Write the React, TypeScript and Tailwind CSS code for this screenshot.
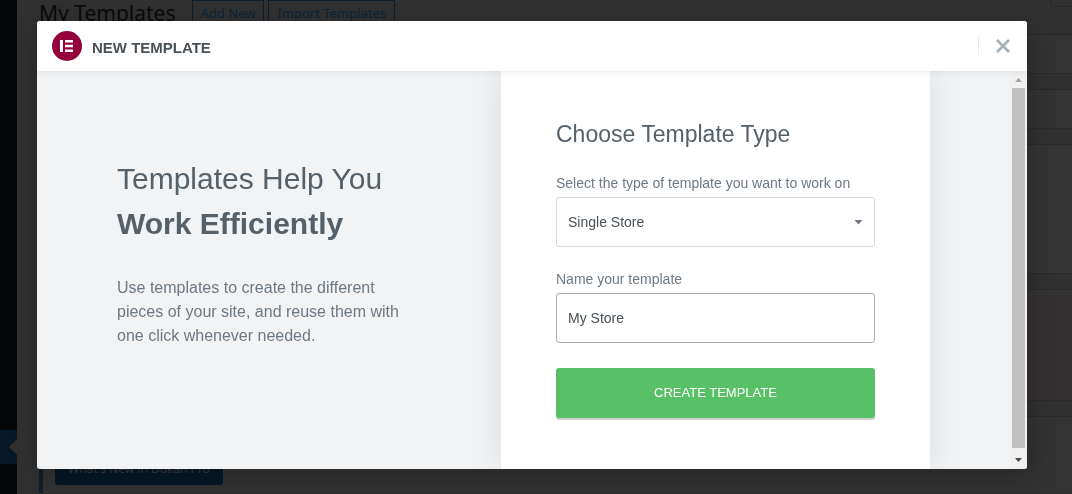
import React, { useState } from 'react';
import clsx from 'clsx';

const noticeCards = [
  { id: 'screen', className: 'h-10 bg-[#333333] border-[#292929]' },
  { id: 'update', className: 'h-10 bg-[#333333] border-[#292929]' },
  { id: 'license', className: 'h-[130px] bg-[#343434] border-[#292929]' },
  { id: 'promo', className: 'h-28 bg-[#343132] border-[#292929]' },
];

const AdminPage: React.FC = () => (
  <div className="flex h-screen overflow-hidden bg-[#303030] font-['Noto_Sans','Open_Sans',sans-serif]">
    {/* Collapsed admin menu */}
    <aside className="w-[17px] shrink-0 bg-[#050608] pt-[430px]">
      <div className="flex h-[34px] items-center justify-end bg-[#061726]">
        <svg width="8" height="16" viewBox="0 0 8 16" fill="#303030">
          <path d="M8 0v16L0 8z" />
        </svg>
      </div>
    </aside>

    <main className="min-w-0 flex-1 pl-[22px]">
      <div className="flex h-[34px] items-start">
        <h1 className="text-[21px] leading-[26px] text-[#0b0b0b]">My Templates</h1>
        <button type="button" className="ml-4 h-[26px] border border-[#0a1e2f] px-2 text-[13px] leading-6 text-[#0a2338]">
          Add New
        </button>
        <button type="button" className="ml-1 h-[26px] border border-[#0a1e2f] px-2 text-[13px] leading-6 text-[#0a2338]">
          Import Templates
        </button>
        <div className="ml-auto h-[7px] w-[22px] rounded-bl border-b border-l border-[#262626]"></div>
      </div>

      <div className="flex flex-col gap-[15px]">
        {noticeCards.map((card) => (
          <div key={card.id} className={clsx('shrink-0 border-y', card.className)}></div>
        ))}
        <div className="h-[77px] shrink-0 border-l-4 border-t border-l-[#0f1e2c] border-t-[#292929] bg-[#333333] pl-3 pt-9">
          <button type="button" className="h-8 rounded-[3px] bg-[#061726] px-[13px] text-xs leading-8 text-[#3b3b3b]">
            What's New in Dokan Pro
          </button>
        </div>
      </div>
    </main>
  </div>
);

const Logo: React.FC = () => (
  <svg width="30" height="30" viewBox="0 0 30 30">
    <circle cx="15" cy="15" r="15" fill="#93003c" />
    <path d="M8 9h3v12H8zM13 9h8v2.4h-8zM13 13.8h8v2.400h-8zM13 18.600h8V21h-8z" fill="#fff" />
  </svg>
);

const ScrollTrack: React.FC = () => (
  <div className="flex w-[17px] shrink-0 flex-col items-center bg-[#f1f1f1]" aria-hidden="true">
    <svg width="17" height="17" viewBox="0 0 17 17" fill="#a3a3a3">
      <path d="M5 11h7L8.500 7z" />
    </svg>
    <div className="w-[13px] flex-1 bg-[#c1c1c1]"></div>
    <svg className="mt-1" width="17" height="17" viewBox="0 0 17 17" fill="#505050">
      <path d="M5 6h7L8.500 10z" />
    </svg>
  </div>
);

const App: React.FC = () => {
  const [type, setType] = useState('single-store');
  const [name, setName] = useState('My Store');

  return (
    <>
      <AdminPage />

      <div className="fixed inset-0 overflow-hidden pl-[37px] pr-[45px] pt-[21px] font-['Liberation_Sans',Arial,sans-serif]">
        <div role="dialog" aria-labelledby="dialog-title" className="overflow-hidden rounded-[3px] bg-[#f1f3f5] shadow-[2px_8px_23px_3px_rgba(0,0,0,0.2)]">
          {/* Header */}
          <header className="relative flex h-[50px] items-center bg-white pl-[15px] pr-4 shadow-[0_0_8px_rgba(0,0,0,0.1)]">
            <Logo />
            <h2 id="dialog-title" className="ml-2.5 pt-1 text-[15px] font-bold leading-5 text-[#495157]">
              NEW TEMPLATE
            </h2>
            <button type="button" aria-label="Close" className="ml-auto flex h-[18px] items-center border-l border-[#e6e9ec] pl-4">
              <svg width="16" height="16" viewBox="0 0 16 16" fill="none" stroke="#a4afb7" strokeWidth="2.600">
                <path d="M2 2l12 12M14 2L2 14" />
              </svg>
            </button>
          </header>

          {/* Body */}
          <div className="flex">
            <section className="min-w-0 flex-1 pl-20 pt-[85px]">
              <h3 className="text-[30px] leading-[45px] text-[#556068]">
                Templates Help You
                <strong className="block">Work Efficiently</strong>
              </h3>
              <p className="mt-[30px] max-w-[290px] text-base text-[#6d7882]">
                Use templates to create the different pieces of your site, and reuse them with one click whenever needed.
              </p>
            </section>

            <form
              onSubmit={(e) => e.preventDefault()}
              className="mr-20 w-[429px] shrink-0 bg-white px-[55px] pb-[51px] pt-[47px] text-sm text-[#495157] shadow-[0_0_30px_rgba(0,0,0,0.1)]"
            >
              <h3 className="text-[23px] leading-8 text-[#556068]">Choose Template Type</h3>

              <label htmlFor="template-type" className="mt-[23px] block pb-1 text-[#6d7882]">
                Select the type of template you want to work on
              </label>
              <div className="relative">
                <select
                  id="template-type"
                  value={type}
                  onChange={(e) => setType(e.target.value)}
                  className="block h-[50px] w-full appearance-none rounded-[3px] border border-[#d5dadf] bg-white px-[11px] outline-none"
                >
                  <option value="single-store">Single Store</option>
                </select>
                <svg className="pointer-events-none absolute right-3 top-[23px]" width="9" height="5" viewBox="0 0 9 5" fill="#6d7882">
                  <path d="M0.500 0h8L4.500 4.500z" />
                </svg>
              </div>

              <label htmlFor="template-name" className="mt-[22px] block pb-1 text-[#6d7882]">
                Name your template
              </label>
              <input
                id="template-name"
                type="text"
                value={name}
                onChange={(e) => setName(e.target.value)}
                className="block h-[50px] w-full rounded-[3px] border border-[#a4afb7] bg-white px-[11px] outline-none"
              />

              <button
                type="submit"
                className="mt-[25px] block h-[50px] w-full rounded-[3px] bg-[#58c067] text-[13px] font-medium text-white shadow-[0_2px_0_#cfcfcf]"
              >
                CREATE TEMPLATE
              </button>
            </form>

            <ScrollTrack />
          </div>
        </div>
      </div>
    </>
  );
};

export default App;
